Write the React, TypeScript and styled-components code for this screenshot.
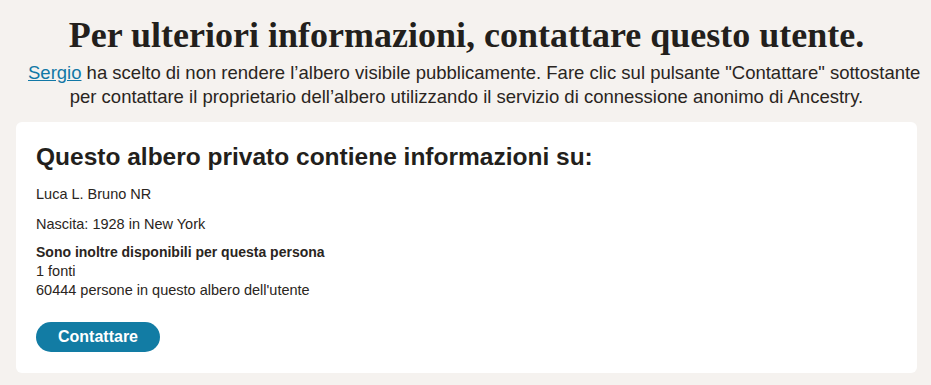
import React from "react";
import styled, { createGlobalStyle } from "styled-components";

const Global = createGlobalStyle`
  html, body { margin: 0; padding: 0; background: #f5f2ef; }
  body { font-family: "Liberation Sans", Arial, sans-serif; color: #2a2521; }
`;

const Page = styled.main`
  padding: 15px 14px 12px 16px;
  display: flex;
  flex-direction: column;
  align-items: center;
`;

const Title = styled.h1`
  margin: 0;
  font-family: "Liberation Serif", "Times New Roman", serif;
  font-weight: 700;
  font-size: 36px;
  line-height: 40px;
  color: #231f1c;
  text-align: center;
`;

const Lead = styled.p`
  align-self: stretch;
  margin: 6px 12px 0;
  font-size: 18.5px;
  line-height: 24px;
  text-align: center;
  color: #2a2521;
  white-space: nowrap;
`;

const UserLink = styled.a`
  color: #1178a6;
  text-decoration: underline;
`;

const Card = styled.section`
  align-self: stretch;
  margin-top: 13px;
  background: #ffffff;
  border-radius: 6px;
  padding: 21px 20px 21px;
`;

const CardTitle = styled.h2`
  margin: 0;
  font-size: 24.5px;
  line-height: 28px;
  font-weight: 700;
  color: #231f1c;
`;

const Line = styled.p<{ $gap: number }>`
  margin: ${(p) => p.$gap}px 0 0;
  font-size: 14.5px;
  line-height: 20px;
`;

const Group = styled.div`
  margin-top: 9px;
  font-size: 14.5px;
  line-height: 19px;
`;

const GroupLabel = styled.div`
  font-weight: 700;
  font-size: 14px;
`;

const Button = styled.button`
  display: block;
  margin-top: 22px;
  height: 30px;
  padding: 0 22px;
  border: none;
  border-radius: 15px;
  background: #127ca4;
  color: #fff;
  font-family: "Liberation Sans", Arial, sans-serif;
  font-weight: 700;
  font-size: 16px;
  cursor: pointer;
`;

export default function App() {
  return (
    <>
      <Global />
      <Page>
        <Title>Per ulteriori informazioni, contattare questo utente.</Title>
        <Lead>
          <UserLink href="#">Sergio</UserLink> ha scelto di non rendere l’albero visibile pubblicamente. Fare clic sul pulsante "Contattare" sottostante
          <br />
          per contattare il proprietario dell’albero utilizzando il servizio di connessione anonimo di Ancestry.
        </Lead>
        <Card>
          <CardTitle>Questo albero privato contiene informazioni su:</CardTitle>
          <Line $gap={13}>Luca L. Bruno NR</Line>
          <Line $gap={10}>Nascita: 1928 in New York</Line>
          <Group>
            <GroupLabel>Sono inoltre disponibili per questa persona</GroupLabel>
            <div>1 fonti</div>
            <div>60444 persone in questo albero dell'utente</div>
          </Group>
          <Button>Contattare</Button>
        </Card>
      </Page>
    </>
  );
}
